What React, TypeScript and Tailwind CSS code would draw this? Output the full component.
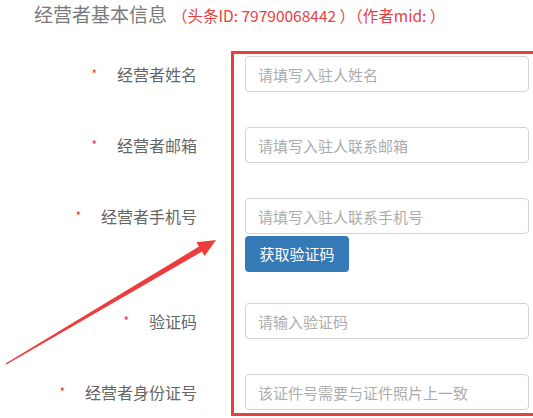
import React from "react"

const fields = [
  { label: "经营者姓名", placeholder: "请填写入驻人姓名" },
  { label: "经营者邮箱", placeholder: "请填写入驻人联系邮箱" },
  { label: "经营者手机号", placeholder: "请填写入驻人联系手机号", sms: true },
  { label: "验证码", placeholder: "请输入验证码" },
  { label: "经营者身份证号", placeholder: "该证件号需要与证件照片上一致" },
]

export default function App() {
  return (
    <div className="relative w-[533px] h-[418px] overflow-hidden bg-white font-['Noto_Sans_CJK_SC','Noto_Sans',sans-serif]">
      {/* Heading */}
      <div className="flex items-baseline h-[26px] pl-[34px] pt-[2px]">
        <h1 className="text-[19px] leading-[24px] text-[#7a7a7a]">经营者基本信息</h1>
        <span className="ml-[5px] text-[15.5px] leading-[24px] text-[#e8403f]">（头条ID: 79790068442 ）（作者mid: ）</span>
      </div>

      {/* Form */}
      <div className="mt-[30px] flex flex-col">
        {fields.map((f, i) => (
          <div key={f.label} className={i === 2 ? "mb-[31px]" : "mb-[35px]"}>
            <div className="flex">
              <div className="w-[197px] h-[36px] flex items-center justify-end text-[16px] text-[#666]">
                <span className="mr-[20px] text-[12px] text-[#e8403f]">*</span>
                {f.label}
              </div>
              <input
                placeholder={f.placeholder}
                className="ml-[48px] w-[284px] h-[36px] px-[12px] border border-[#d4d4d4] rounded-[4px] text-[15px] text-[#555] placeholder:text-[#acacac] outline-none"
              />
            </div>
            {f.sms && (
              <button className="ml-[245px] mt-[2px] w-[104px] h-[36px] rounded-[4px] bg-[#337ab7] text-white text-[15px]">
                获取验证码
              </button>
            )}
          </div>
        ))}
      </div>

      {/* Annotation: red frame */}
      <div className="absolute left-[231px] top-[51px] w-[320px] h-[365px] border-[3px] border-[#e8403f] pointer-events-none" />

      {/* Annotation: arrow */}
      <svg className="absolute inset-0 pointer-events-none" width="533" height="418" viewBox="0 0 533 418">
        <polygon
          fill="#ee3b3b"
          points="5.6,363.4 199.0,246.6 196.4,242.2 216,240 204.6,256 202.0,251.6 6.4,364.6"
        />
      </svg>
    </div>
  )
}
